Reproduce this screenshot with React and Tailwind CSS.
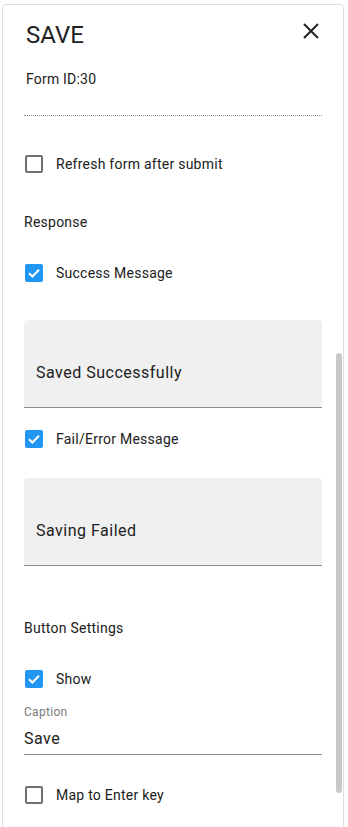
import React from "react";

const Checkbox = ({ checked }) =>
  checked ? (
    <span className="w-[18px] h-[18px] rounded-[2px] bg-[#2196f3] flex items-center justify-center shrink-0">
      <svg width="18" height="18" viewBox="0 0 18 18">
        <polyline points="4,9.2 7.4,12.5 14,5.8" fill="none" stroke="#fff" strokeWidth="2" />
      </svg>
    </span>
  ) : (
    <span className="w-[18px] h-[18px] rounded-[2px] border-2 border-[#707070] shrink-0" />
  );

const CheckRow = ({ checked, label, className = "" }) => (
  <div className={`flex items-center h-[20px] pl-[1px] ${className}`}>
    <Checkbox checked={checked} />
    <span className="ml-[13px] text-[14px] leading-[20px] tracking-[0.25px] text-[#212121]">{label}</span>
  </div>
);

const FilledField = ({ value, className = "" }) => (
  <div className={`h-[88px] bg-[#f0f0f0] rounded-t-[4px] border-b border-[#8c8c8c] pt-[41px] pl-[12px] ${className}`}>
    <span className="text-[16px] leading-[24px] tracking-[0.5px] text-[#212121]">{value}</span>
  </div>
);

export default function App() {
  return (
    <div
      className="h-[827px] overflow-hidden bg-white"
      style={{ fontFamily: "Roboto, 'Liberation Sans', sans-serif" }}
    >
      <div className="relative ml-[2px] mt-[4px] w-[342px] h-[860px] border border-[#dedede] rounded-[4px] px-[21px]">
        {/* Header */}
        <div className="flex justify-between mt-[14px] pl-[2px]">
          <h1 className="text-[24px] leading-[32px] text-[#212121]">SAVE</h1>
          <svg className="mt-[4px] mr-[3px]" width="16" height="16" viewBox="0 0 16 16">
            <path d="M1 1 L15 15 M15 1 L1 15" stroke="#212121" strokeWidth="2" />
          </svg>
        </div>

        <div className="mt-[18px] pl-[2px] text-[14px] leading-[20px] tracking-[0.2px] text-[#212121]">Form ID:30</div>
        <div className="mt-[26px] border-b border-dotted border-[#8c8c8c]" />

        <CheckRow className="mt-[38px]" checked={false} label="Refresh form after submit" />

        <div className="mt-[38px] text-[14px] leading-[20px] tracking-[0.25px] text-[#212121]">Response</div>

        <CheckRow className="mt-[31px]" checked label="Success Message" />
        <FilledField className="mt-[37px]" value="Saved Successfully" />

        <CheckRow className="mt-[21px]" checked label="Fail/Error Message" />
        <FilledField className="mt-[29px]" value="Saving Failed" />

        <div className="mt-[52px] text-[14px] leading-[20px] tracking-[0.25px] text-[#212121]">Button Settings</div>

        <CheckRow className="mt-[31px]" checked label="Show" />

        <div className="mt-[15px] text-[12px] leading-[16px] tracking-[0.3px] text-[#7a7a7a]">Caption</div>
        <div className="mt-[7px] border-b border-[#8c8c8c] pb-[3px] text-[16px] leading-[24px] tracking-[0.5px] text-[#212121]">
          Save
        </div>

        <CheckRow className="mt-[30px]" checked={false} label="Map to Enter key" />

        {/* scrollbar thumb */}
        <div className="absolute right-[1px] top-[348px] w-[6px] h-[440px] rounded-full bg-[#c8c8c8]" />
      </div>
    </div>
  );
}
